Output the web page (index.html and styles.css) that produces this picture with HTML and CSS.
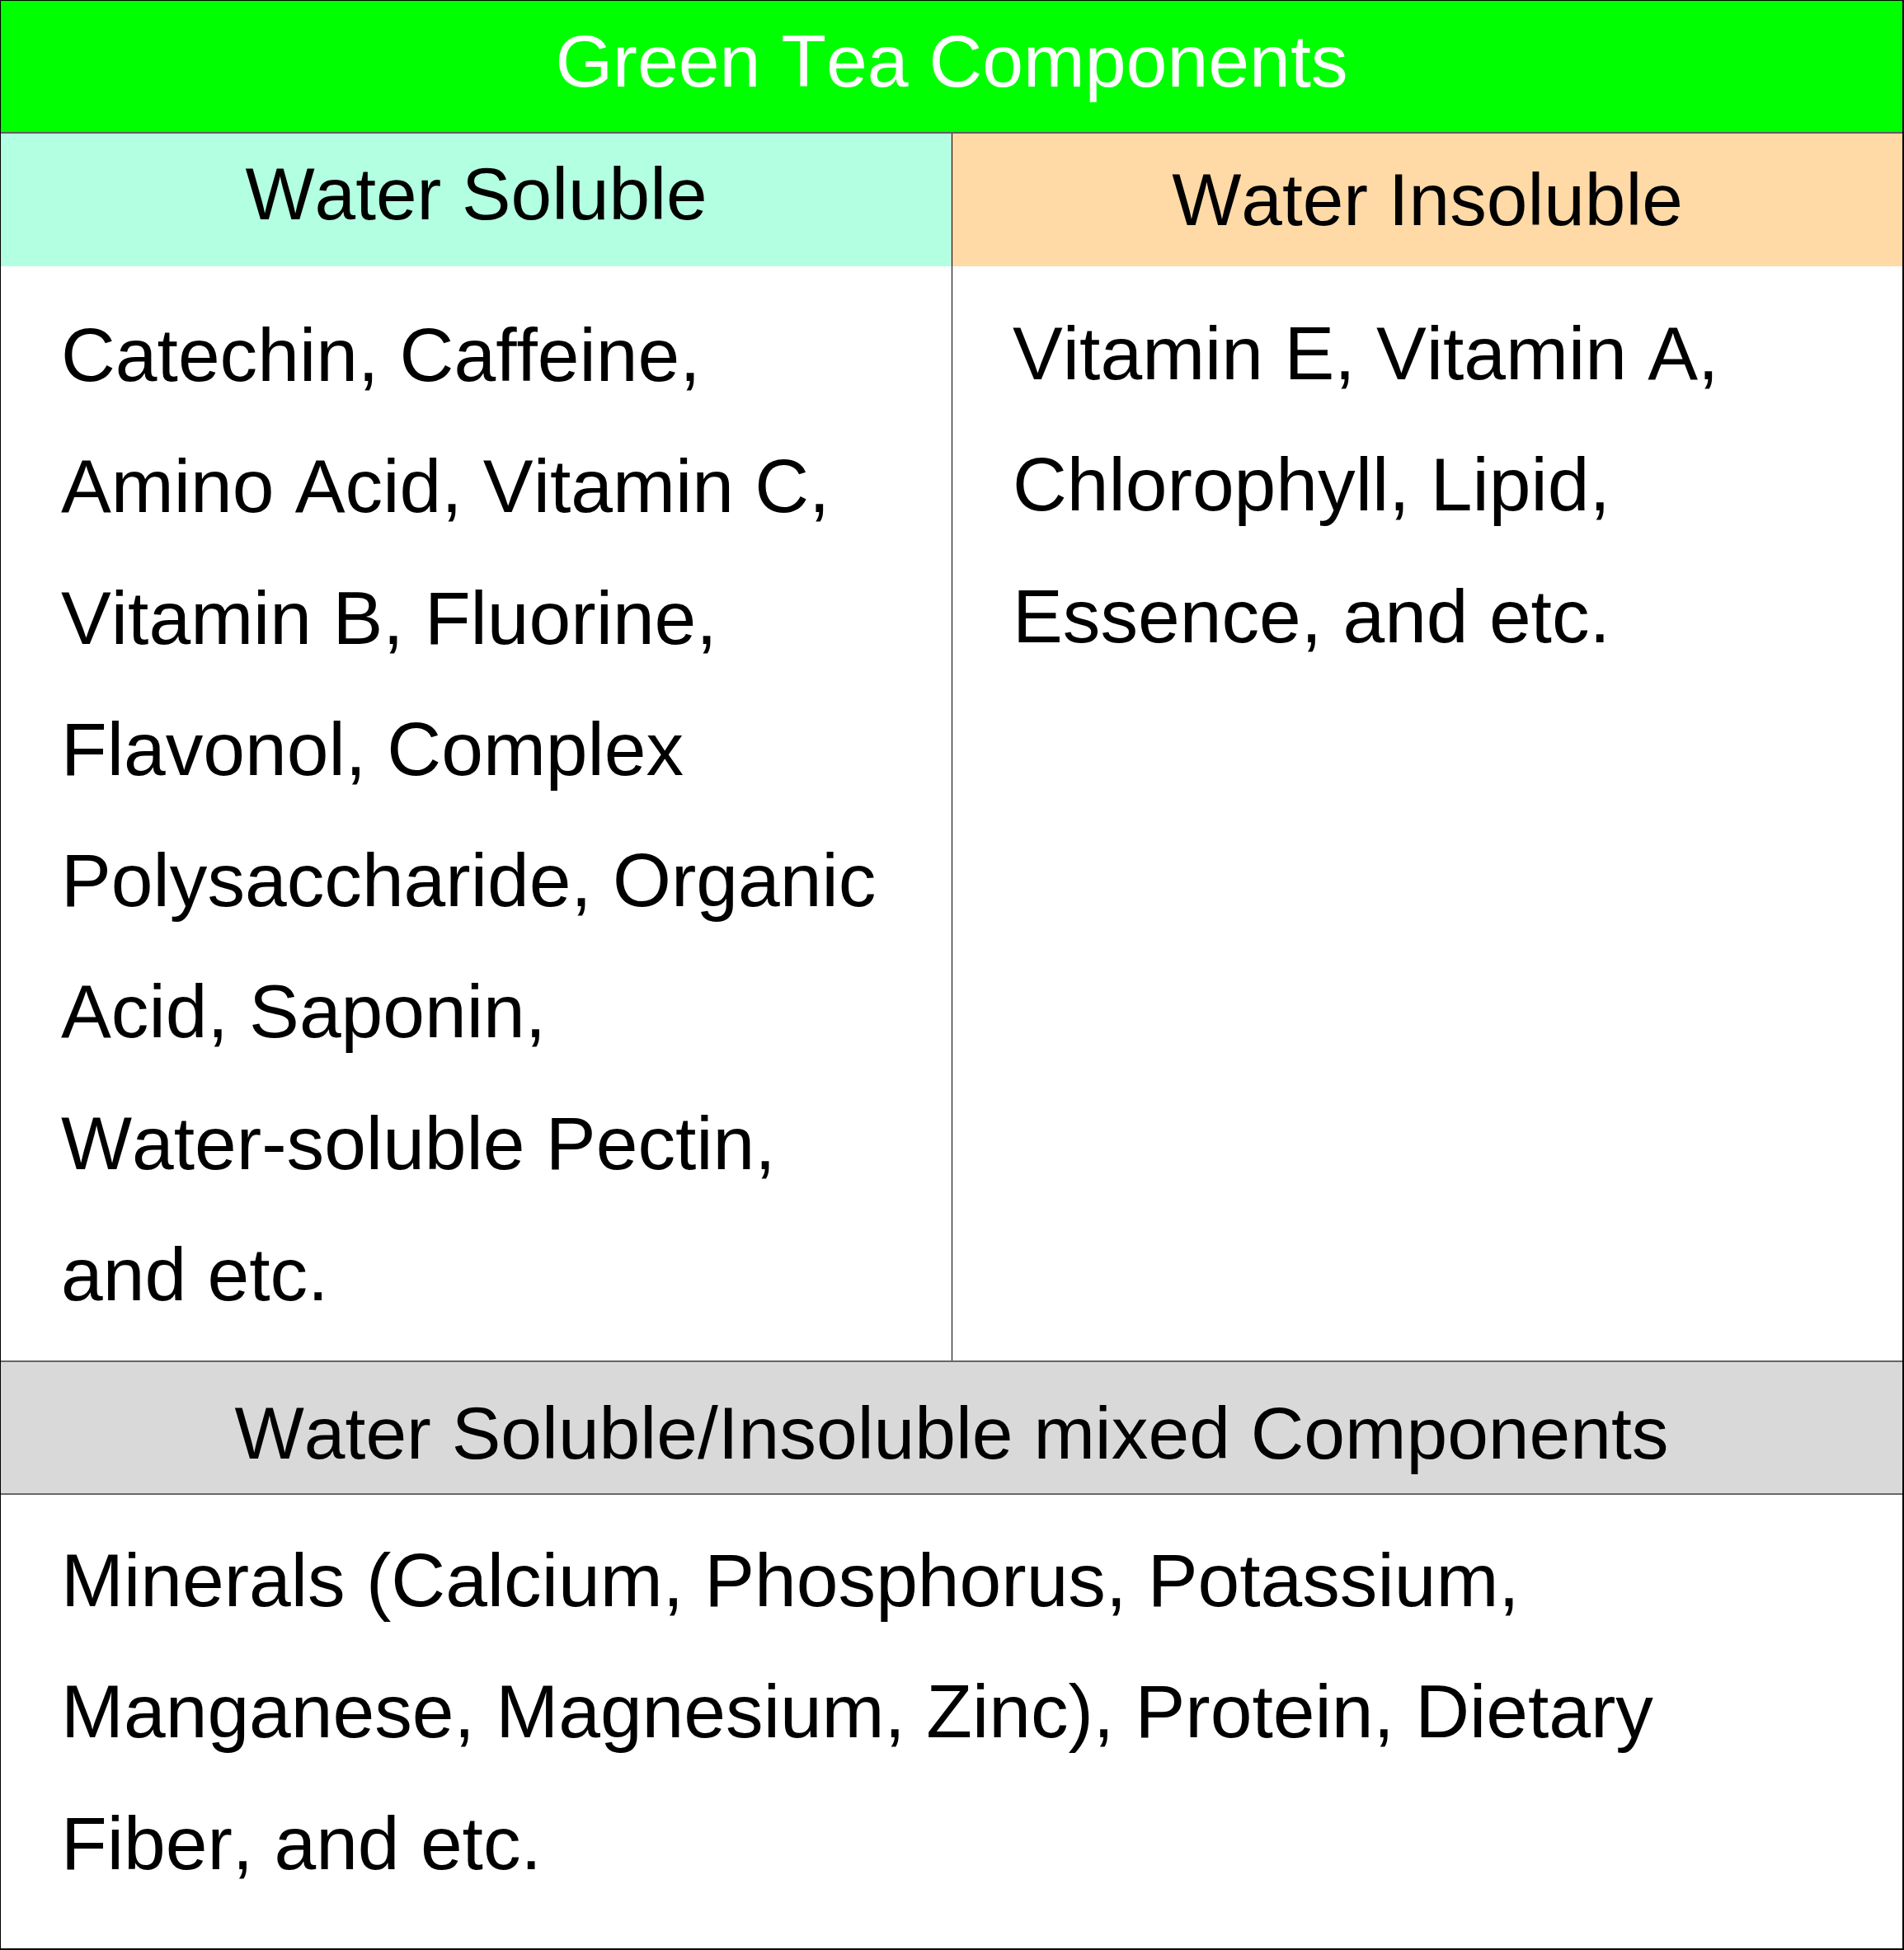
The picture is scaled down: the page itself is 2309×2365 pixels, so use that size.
FILE: index.html
```html
<!DOCTYPE html>
<html lang="en">
<head>
<meta charset="utf-8">
<title>Green Tea Components</title>
<link rel="stylesheet" href="styles.css">
</head>
<body>
<div class="table">
  <div class="title">Green Tea Components</div>
  <div class="cols heads">
    <div class="head head-soluble">Water Soluble</div>
    <div class="head head-insoluble">Water Insoluble</div>
  </div>
  <div class="cols bodies">
    <div class="cell cell-left">Catechin, Caffeine,<br>Amino Acid, Vitamin C,<br>Vitamin B, Fluorine,<br>Flavonol, Complex<br>Polysaccharide, Organic<br>Acid, Saponin,<br>Water-soluble Pectin,<br>and etc.</div>
    <div class="cell cell-right">Vitamin E, Vitamin A,<br>Chlorophyll, Lipid,<br>Essence, and etc.</div>
  </div>
  <div class="mixed-head">Water Soluble/Insoluble mixed Components</div>
  <div class="mixed-body">Minerals (Calcium, Phosphorus, Potassium,<br>Manganese, Magnesium, Zinc), Protein, Dietary<br>Fiber, and etc.</div>
</div>
</body>
</html>
```

FILE: styles.css
```css
html, body {
  margin: 0;
  padding: 0;
  background: #ffffff;
}

.table {
  box-sizing: border-box;
  width: 2309px;
  height: 2365px;
  border-top: 1px solid #000;
  border-left: 1px solid #000;
  border-right: 2px solid #000;
  border-bottom: 2px solid #000;
  display: flex;
  flex-direction: column;
  font-family: "Liberation Sans", Arial, sans-serif;
  font-size: 89.6px;
  font-kerning: none;
  color: #000;
  overflow: hidden;
}

.title {
  box-sizing: border-box;
  height: 161px;
  background: #00ff00;
  color: #ffffff;
  text-align: center;
  line-height: 146px;
  border-bottom: 2px solid #606060;
  flex: none;
}

.cols {
  display: grid;
  grid-template-columns: 1154px 1fr;
  flex: none;
}

.heads {
  box-sizing: border-box;
  height: 161px;
  border-bottom: 1px solid #000;
}

.head {
  font-size: 89.2px;
  text-align: center;
  white-space: nowrap;
}

.head-soluble {
  background: #b3ffe2;
  border-right: 1px solid #000;
  line-height: 146px;
}

.head-insoluble {
  background: #ffd9a6;
  line-height: 161px;
}

.bodies {
  height: 1327px;
}

.cell {
  font-size: 91.2px;
  line-height: 159.3px;
  white-space: nowrap;
}

.cell-left {
  border-right: 1px solid #000;
  padding: 28px 0 0 73px;
}

.cell-right {
  padding: 26px 0 0 73px;
}

.mixed-head {
  box-sizing: border-box;
  height: 163px;
  flex: none;
  background: #d9d9d9;
  border-top: 2px solid #666;
  border-bottom: 2px solid #666;
  padding-top: 13px;
  font-size: 89.4px;
  line-height: 146px;
  text-align: center;
  white-space: nowrap;
}

.mixed-body {
  flex: 1;
  font-size: 91.2px;
  padding: 24px 0 0 73px;
  line-height: 159.3px;
  white-space: nowrap;
}
```
